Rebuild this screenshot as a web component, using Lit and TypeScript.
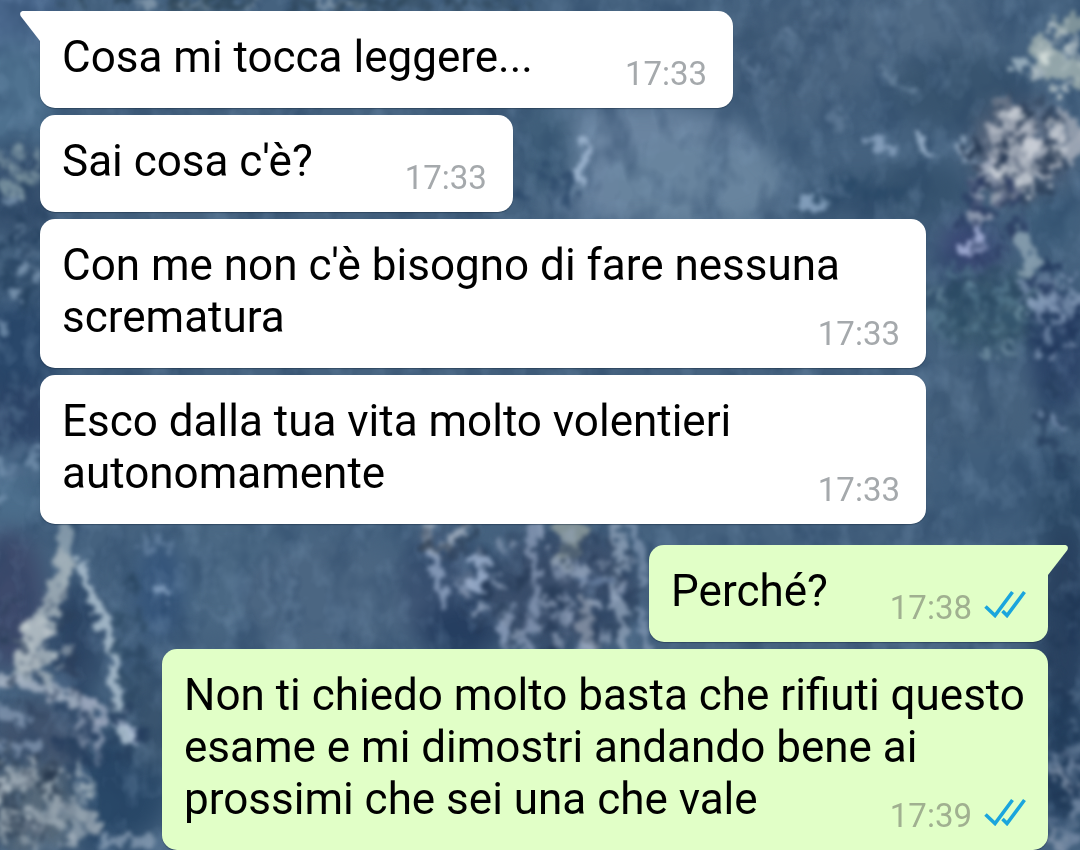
import { LitElement, html, css, svg } from "lit";
import { customElement, property } from "lit/decorators.js";

interface Message {
  text: string;
  time: string;
  out?: boolean;
  first?: boolean;
}

const MESSAGES: Message[] = [
  { text: "Cosa mi tocca leggere...", time: "17:33", first: true },
  { text: "Sai cosa c'è?", time: "17:33" },
  { text: "Con me non c'è bisogno di fare nessuna scrematura", time: "17:33" },
  { text: "Esco dalla tua vita molto volentieri autonomamente", time: "17:33" },
  { text: "Perché?", time: "17:38", out: true, first: true },
  {
    text: "Non ti chiedo molto basta che rifiuti questo esame e mi dimostri andando bene ai prossimi che sei una che vale",
    time: "17:39",
    out: true,
  },
];

// Broad tones of the sea: cx, cy, rx, ry, colour.
const TONES: [number, number, number, number, string][] = [
  [15, 20, 50, 60, "#4d6b90"],
  [15, 100, 45, 60, "#4f7290"],
  [20, 190, 40, 50, "#36506e"],
  [15, 350, 45, 50, "#29476a"],
  [20, 420, 40, 40, "#2d4568"],
  [15, 490, 40, 40, "#4b6d8b"],
  [640, 165, 130, 60, "#6a84a0"],
  [700, 185, 90, 45, "#68849e"],
  [545, 150, 30, 50, "#3f5e7a"],
  [800, 60, 80, 60, "#48637f"],
  [920, 30, 80, 50, "#506b86"],
  [960, 90, 70, 40, "#38546f"],
  [850, 200, 60, 26, "#3b5875"],
  [920, 190, 50, 30, "#36536f"],
  [1020, 150, 50, 50, "#56647a"],
  [970, 250, 30, 30, "#394774"],
  [1050, 220, 30, 30, "#3f5f7c"],
  [1000, 310, 70, 40, "#3b5b70"],
  [1060, 350, 30, 60, "#2c4368"],
  [980, 410, 60, 50, "#45617d"],
  [1000, 490, 70, 50, "#405e7c"],
  [1065, 520, 30, 60, "#2c4966"],
  [1065, 620, 30, 90, "#29415f"],
  [1065, 760, 30, 70, "#243f5e"],
  [230, 570, 100, 60, "#4a6884"],
  [330, 600, 90, 60, "#4b6682"],
  [160, 590, 24, 50, "#34547a"],
  [440, 590, 40, 60, "#3d5474"],
  [460, 630, 40, 30, "#263e60"],
  [560, 590, 80, 60, "#3a4e6b"],
  [10, 600, 34, 70, "#3d4a6c"],
  [75, 640, 26, 56, "#2d4564"],
  [110, 790, 60, 56, "#294868"],
  [150, 720, 30, 50, "#39546f"],
  [40, 740, 50, 40, "#40536e"],
  [30, 810, 50, 50, "#56697a"],
];

// Foam streaks: points, width, colour, opacity.
const STREAKS: [string, number, string, number][] = [
  ["M64 522 C68 545 66 560 64 584", 10, "#9fb2bd", 0.7],
  ["M64 560 C64 600 42 612 40 626 C26 640 34 660 16 676", 18, "#a3b2ba", 0.85],
  ["M32 625 L24 662 L40 656", 18, "#b0bcc2", 0.8],
  ["M80 562 C88 602 112 624 114 662 C118 696 112 716 128 738", 10, "#a9bdcc", 0.9],
  ["M0 678 C28 682 56 694 84 702 L98 724", 14, "#a7b4c4", 0.85],
  ["M86 700 L82 742 M100 716 L98 760", 10, "#96a3b9", 0.75],
  ["M118 718 L138 740", 9, "#b8c8df", 0.9],
  ["M0 710 L24 722 M0 748 C12 738 24 754 36 744", 10, "#8c9fb9", 0.7],
  ["M0 798 C18 768 20 790 30 776", 15, "#a9b4bd", 0.8],
  ["M0 826 C30 822 40 836 56 816 C72 796 88 814 96 832", 12, "#94a2ad", 0.75],
  ["M108 842 C126 836 138 848 150 840", 10, "#91a5bb", 0.7],
  ["M428 526 C424 548 434 558 448 544 C460 530 464 532 468 522", 9, "#a9b5c4", 0.8],
  ["M434 556 C440 574 438 590 444 604", 9, "#94a8c6", 0.8],
  ["M462 578 L476 586 C488 582 484 564 478 560", 13, "#a1b5d2", 0.85],
  ["M533 528 C528 554 540 570 534 606 C530 626 526 636 526 650", 10, "#8c9db9", 0.75],
  ["M566 528 L580 528 L572 550 L564 560", 20, "#92a09f", 0.8],
  ["M560 562 C556 592 576 600 558 620", 10, "#8b9cb6", 0.7],
  ["M586 604 C584 624 588 640 592 650", 15, "#929cae", 0.75],
  ["M616 526 C612 542 626 560 616 580 C612 602 626 622 624 648", 12, "#8fa1b8", 0.8],
  ["M634 528 C640 548 648 560 642 582 M640 610 L646 648", 8, "#879cb8", 0.7],
  ["M508 614 C500 624 504 638 510 648", 12, "#91a4c1", 0.8],
  ["M582 580 L606 582", 10, "#6e86a8", 0.7],
  ["M588 138 L583 168 L574 181", 8, "#a0b7d2", 0.9],
  ["M870 138 L888 150", 10, "#8fa8c4", 0.8],
  ["M917 137 L931 156", 8, "#a0b7d0", 0.85],
  ["M960 148 L970 158", 11, "#9bb0c8", 0.85],
  ["M806 203 L822 203", 15, "#91acc9", 0.8],
  ["M748 60 L754 80 M782 28 L790 32 M814 28 L818 22 M836 110 L838 128", 9, "#6984a0", 0.6],
  ["M882 72 L912 92", 6, "#718ba5", 0.7],
  ["M1012 62 L1030 66", 7, "#a3b8c6", 0.85],
  ["M1042 48 C1052 84 1066 56 1080 78", 24, "#a0b0b0", 0.85],
  ["M1060 26 L1080 22", 16, "#8fa1a3", 0.8],
  ["M1004 104 L1016 126 C1030 142 1042 150 1056 160 C1066 154 1070 148 1080 142", 17, "#aeb4bf", 0.8],
  ["M996 130 L1008 150 L1034 164 L1018 178 L1004 196", 20, "#a6aeba", 0.8],
  ["M1064 116 L1080 134", 13, "#a1a9b5", 0.8],
  ["M985 164 L978 196 L978 224", 15, "#9da6ba", 0.8],
  ["M962 250 L976 248 L980 232", 10, "#aab6dd", 0.85],
  ["M1020 238 L1032 264 L1028 270", 12, "#9bb1bd", 0.7],
  ["M1034 278 L1048 304 M1056 282 L1040 316", 7, "#98acc5", 0.7],
  ["M933 290 L942 300 M966 288 L972 284 M1016 310 L1018 316", 9, "#789aaa", 0.75],
  ["M984 358 L990 357 M1006 352 L1010 350", 9, "#7694a7", 0.7],
  ["M1036 412 L1060 426", 7, "#869dbc", 0.7],
  ["M8 205 L14 202 M16 228 L20 232 M28 250 L36 248 M18 266 L38 274 M14 291 L22 294", 11, "#829cb6", 0.8],
  ["M0 322 L3 330 M32 463 L40 450 M0 464 L8 470 M0 498 L4 500", 10, "#7592af", 0.8],
  ["M140 4 L150 0 M174 5 L214 4 M244 6 L256 2 M322 4 L360 5", 8, "#91a5b7", 0.7],
  ["M158 541 L168 548 M144 536 L148 550", 8, "#7893b4", 0.5],
  ["M156 588 L168 594", 9, "#8ba6c5", 0.8],
  ["M200 606 C214 610 222 622 236 618 M262 560 L270 610 M286 570 L296 620", 9, "#64809e", 0.45],
  ["M1056 772 L1072 790 M1052 836 L1064 848", 9, "#8797ae", 0.8],
  ["M1058 682 L1078 700 M1070 722 L1080 730", 6, "#566f8b", 0.7],
];

// Spray: cx, cy, rx, ry, count, colour.
const SPRAY: [number, number, number, number, number, string][] = [
  [1020, 150, 52, 56, 60, "#24364f"],
  [1058, 60, 28, 36, 24, "#d3dcda"],
  [1026, 150, 45, 40, 34, "#cdd2d9"],
  [990, 215, 34, 44, 34, "#28395f"],
  [1050, 310, 30, 50, 42, "#1d3358"],
  [1050, 310, 30, 50, 26, "#8aa0bd"],
  [975, 310, 55, 42, 34, "#567a90"],
  [975, 310, 55, 42, 34, "#294861"],
  [1060, 420, 22, 50, 22, "#27405f"],
  [790, 50, 70, 50, 26, "#395471"],
  [20, 240, 24, 66, 38, "#213d5b"],
  [20, 170, 22, 26, 16, "#8aa2ac"],
  [18, 440, 22, 60, 20, "#4e6b8a"],
  [20, 790, 40, 56, 50, "#27384d"],
  [40, 805, 66, 46, 50, "#b4c0c8"],
  [40, 650, 50, 70, 30, "#2b3e59"],
  [44, 640, 26, 40, 18, "#cbd3d5"],
  [95, 735, 50, 38, 32, "#233b5b"],
  [130, 650, 14, 80, 24, "#2b4762"],
  [550, 590, 100, 62, 60, "#263a56"],
  [550, 590, 100, 62, 30, "#9dadc5"],
  [450, 540, 30, 18, 12, "#25354a"],
  [540, 195, 45, 22, 14, "#294668"],
  [855, 195, 52, 20, 16, "#294967"],
  [300, 4, 240, 6, 50, "#2b4355"],
  [1065, 700, 20, 140, 34, "#1e3654"],
  [1065, 790, 20, 60, 22, "#7388a3"],
];

function* random(seed: number): Generator<number> {
  while (true) {
    seed = (seed * 16807) % 2147483647;
    yield seed / 2147483647;
  }
}

function drops() {
  const source = random(4217);
  const next = () => source.next().value as number;
  return SPRAY.flatMap(([cx, cy, rx, ry, count, colour]) =>
    Array.from({ length: count }, () => {
      const angle = next() * Math.PI * 2;
      const reach = Math.sqrt(next());
      const x = Math.round(cx + Math.cos(angle) * reach * rx);
      const y = Math.round(cy + Math.sin(angle) * reach * ry);
      return svg`<ellipse cx=${x} cy=${y} rx=${3 + next() * 4} ry=${3 + next() * 5} fill=${colour} opacity=${0.35 + next() * 0.4} />`;
    })
  );
}

@customElement("sea-wallpaper")
export class SeaWallpaper extends LitElement {
  static styles = css`
    :host {
      display: block;
    }
    .sea {
      display: block;
      width: 100%;
      height: 100%;
    }
  `;

  render() {
    return html`
      <svg class="sea" viewBox="0 0 1080 850" preserveAspectRatio="xMidYMid slice" aria-hidden="true">
        <defs>
          <filter id="wide" x="-10%" y="-10%" width="120%" height="120%" color-interpolation-filters="sRGB">
            <feGaussianBlur stdDeviation="11" />
          </filter>
          <filter id="fine" x="-10%" y="-10%" width="120%" height="120%" color-interpolation-filters="sRGB">
            <feTurbulence type="fractalNoise" baseFrequency="0.09" numOctaves="2" seed="5" result="noise" />
            <feDisplacementMap in="SourceGraphic" in2="noise" scale="26" xChannelSelector="R" yChannelSelector="G" />
            <feGaussianBlur stdDeviation="2" />
          </filter>
          <filter id="shade" x="0" y="0" width="100%" height="100%" color-interpolation-filters="sRGB">
            <feTurbulence type="fractalNoise" baseFrequency="0.03 0.022" numOctaves="3" seed="8" />
            <feColorMatrix values="0 0 0 0 0.14  0 0 0 0 0.25  0 0 0 0 0.38  3 0 0 0 -1.3" />
          </filter>
          <filter id="shine" x="0" y="0" width="100%" height="100%" color-interpolation-filters="sRGB">
            <feTurbulence type="fractalNoise" baseFrequency="0.04 0.03" numOctaves="3" seed="31" />
            <feColorMatrix values="0 0 0 0 0.5  0 0 0 0 0.62  0 0 0 0 0.74  3 0 0 0 -1.45" />
          </filter>
        </defs>
        <rect width="1080" height="850" fill="#45627f" />
        <g filter="url(#wide)">
          ${TONES.map(([cx, cy, rx, ry, fill]) => svg`<ellipse cx=${cx} cy=${cy} rx=${rx} ry=${ry} fill=${fill} />`)}
        </g>
        <rect width="1080" height="850" filter="url(#shade)" opacity="0.35" />
        <rect width="1080" height="850" filter="url(#shine)" opacity="0.25" />
        <g filter="url(#fine)" fill="none" stroke-linecap="round" stroke-linejoin="round">
          ${STREAKS.map(([d, width, stroke, opacity]) => svg`<path d=${d} stroke=${stroke} stroke-width=${width} opacity=${opacity} />`)}
          ${drops()}
        </g>
      </svg>
    `;
  }
}

@customElement("chat-bubble")
export class ChatBubble extends LitElement {
  @property({ attribute: false }) message!: Message;

  static styles = css`
    :host {
      display: block;
    }
    .bubble {
      position: relative;
      box-sizing: border-box;
      padding: 20px 26px 25px 22px;
      border-radius: 15px;
      background: #fff;
      color: #000;
      box-shadow: 0 1px 1px rgba(20, 40, 60, 0.45);
    }
    .out {
      padding-right: 22px;
      background: #e1ffc7;
    }
    .first {
      border-top-left-radius: 0;
    }
    .out.first {
      border-top-left-radius: 15px;
      border-top-right-radius: 0;
    }
    .text {
      margin: 0;
      font-size: 44px;
      line-height: 52px;
    }
    .meta {
      float: right;
      display: flex;
      align-items: flex-start;
      gap: 12px;
      margin: 17px 0 -17px 92px;
      color: #a5a9ac;
      font-size: 33px;
    }
    .out .meta {
      margin-left: 62px;
      color: #a0b090;
    }
    .tail {
      position: absolute;
      top: 0;
      right: 100%;
      width: 20px;
      height: 30px;
    }
    .out .tail {
      right: auto;
      left: 100%;
      transform: scaleX(-1);
    }
    .ticks {
      width: 42px;
      height: 28px;
      margin-top: 8px;
    }
  `;

  render() {
    const { text, time, out, first } = this.message;
    return html`
      <div class="bubble ${out ? "out" : ""} ${first ? "first" : ""}">
        ${first
          ? html`<svg class="tail" viewBox="0 0 20 30" aria-hidden="true">
              <path d="M20.5 0H2.5Q-1 1 .6 5L20 30H20.5Z" fill=${out ? "#e1ffc7" : "#fff"} />
            </svg>`
          : ""}
        <p class="text">
          ${text}<span class="meta"
            ><time>${time}</time>${out
              ? html`<svg class="ticks" viewBox="0 0 42 28" role="img" aria-label="Letto">
                  <path d="M1.500 16.500L11 25.500L28.500 2M18.500 21L23 25.500L40.500 2" fill="none" stroke="#1aa5dd" stroke-width="3.600" />
                </svg>`
              : ""}</span
          >
        </p>
      </div>
    `;
  }
}

@customElement("app-root")
export class AppRoot extends LitElement {
  static styles = css`
    :host {
      display: block;
      position: relative;
      overflow: hidden;
      min-height: 100vh;
      font-family: Roboto, "Noto Sans", sans-serif;
    }
    .wallpaper {
      position: absolute;
      inset: 0;
    }
    .chat {
      position: relative;
      display: flex;
      flex-direction: column;
      align-items: flex-start;
      gap: 7px;
      padding: 11px 32px 0 40px;
    }
    .row {
      max-width: calc(100% - 122px);
    }
    .row.out {
      align-self: flex-end;
    }
    .row.turn {
      margin-top: 14px;
    }
  `;

  render() {
    return html`
      <sea-wallpaper class="wallpaper"></sea-wallpaper>
      <main class="chat">
        ${MESSAGES.map(
          (message, i) => html`<chat-bubble
            class="row ${message.out ? "out" : ""} ${message.first && i > 0 ? "turn" : ""}"
            .message=${message}
          ></chat-bubble>`
        )}
      </main>
    `;
  }
}
